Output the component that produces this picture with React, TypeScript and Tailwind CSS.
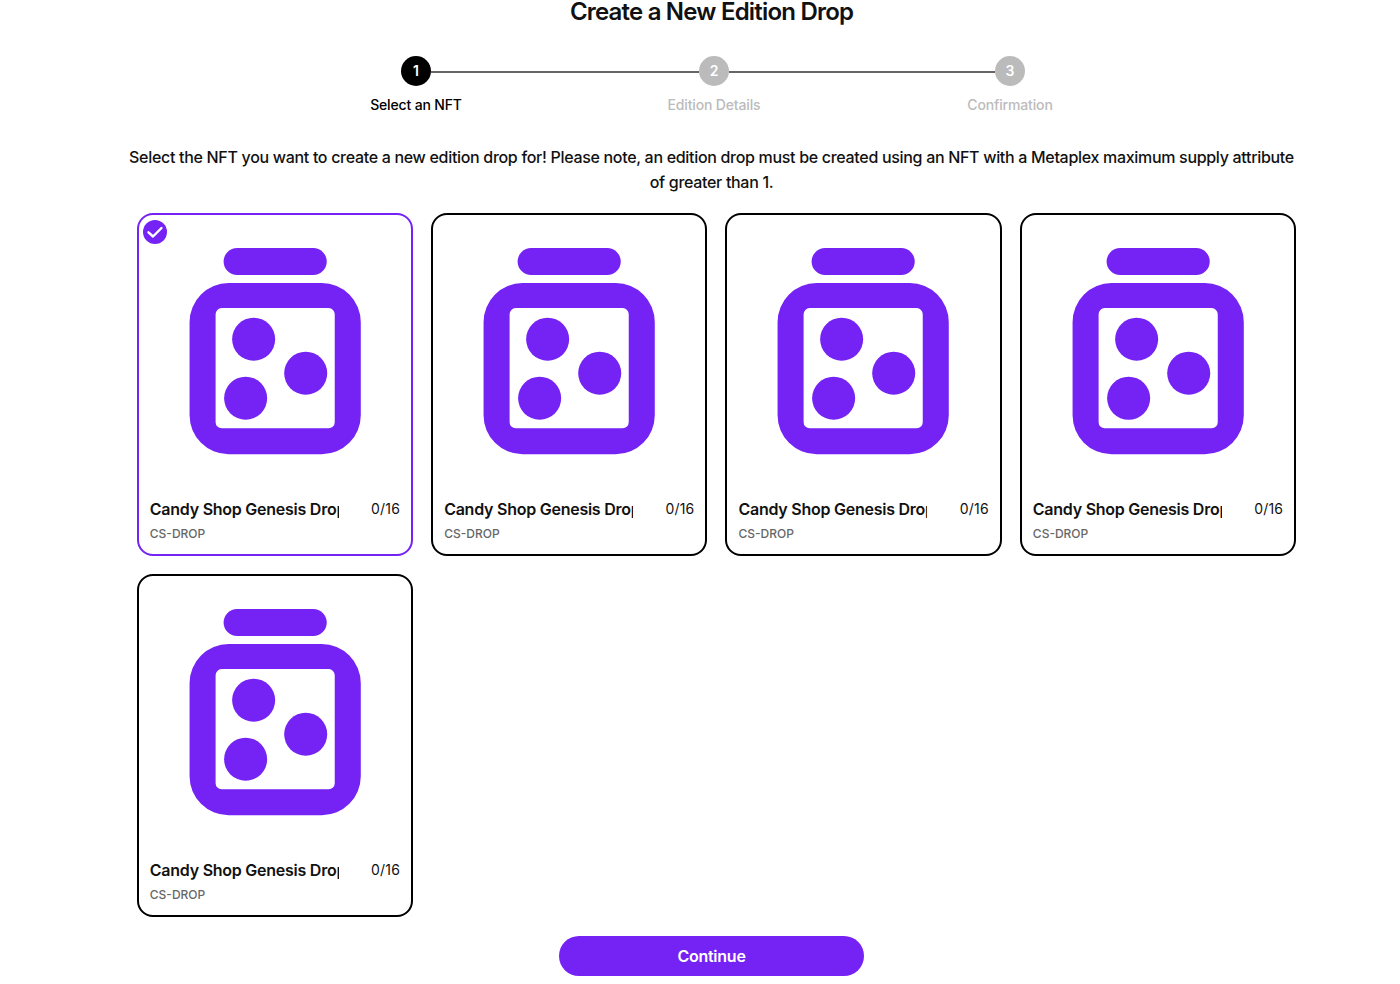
import React from "react";

const steps = [
  { label: "Select an NFT", active: true },
  { label: "Edition Details", active: false },
  { label: "Confirmation", active: false },
];

function JarImage() {
  return (
    <svg viewBox="-0.5 0 272 272" className="block w-full h-auto blur-[0.6px]" fill="#7522f5">
      <rect x="84" y="33" width="103" height="27" rx="13.5" />
      <path
        fillRule="evenodd"
        d="M89 68h93a39 39 0 0 1 39 39v93a39 39 0 0 1-39 39H89a39 39 0 0 1-39-39v-93a39 39 0 0 1 39-39zM82 93a6 6 0 0 0-6 6v108a6 6 0 0 0 6 6h107a6 6 0 0 0 6-6V99a6 6 0 0 0-6-6z"
      />
      <circle cx="114" cy="124" r="21.5" />
      <circle cx="166" cy="158" r="21.5" />
      <circle cx="106" cy="183" r="21.5" />
    </svg>
  );
}

function DropCard({ selected }: { selected?: boolean }) {
  return (
    <div
      className={
        selected
          ? "relative h-[343px] rounded-2xl border-2 border-[#7522f5] bg-white"
          : "relative h-[343px] rounded-2xl border-2 border-black bg-white"
      }
    >
      {selected && (
        <div className="absolute left-[4px] top-[5px] h-[24px] w-[24px] rounded-full bg-[#7522f5]">
          <svg viewBox="0 0 24 24" className="h-[24px] w-[24px]" fill="none" stroke="white" strokeWidth="2.4" strokeLinecap="round" strokeLinejoin="round">
            <path d="M5.5 12.3l4.5 4.2 8.5-8.5" />
          </svg>
        </div>
      )}
      <JarImage />
      <div className="flex items-center justify-between px-[11px] pt-[10px]">
        <div className="w-[189px] overflow-hidden whitespace-nowrap text-[16px] leading-[24px] font-semibold tracking-[-0.25px] text-[#111]">
          Candy Shop Genesis Drop
        </div>
        <div className="text-[14px] leading-[24px] tracking-[0.2px] text-[#111]">0/16</div>
      </div>
      <div className="px-[11px] pt-[3px] text-[12px] leading-[20px] font-medium text-[#666]">CS-DROP</div>
    </div>
  );
}

export default function App() {
  return (
    <div className="min-h-[984px] bg-white font-['Inter',sans-serif]">
      <h1 className="pl-[23px] text-center text-[24px] leading-[24px] font-semibold tracking-[-0.8px] text-[#111]">
        Create a New Edition Drop
      </h1>

      <div className="mt-[32px] ml-[401px] flex w-[624px] items-center">
        <div className="flex h-[30px] w-[30px] items-center justify-center rounded-full bg-black pb-[2px] text-[14px] font-semibold text-white">
          1
        </div>
        <div className="mt-[2px] h-[2px] w-[268px] bg-[#666]" />
        <div className="flex h-[30px] w-[30px] items-center justify-center rounded-full bg-[#bbb] pb-[2px] text-[14px] font-semibold text-white">
          2
        </div>
        <div className="mt-[2px] h-[2px] w-[266px] bg-[#666]" />
        <div className="flex h-[30px] w-[30px] items-center justify-center rounded-full bg-[#bbb] pb-[2px] text-[14px] font-semibold text-white">
          3
        </div>
      </div>

      <div className="mt-[7px] ml-[316px] flex">
        {steps.map((s, i) => (
          <div
            key={s.label}
            className={
              (s.active ? "text-black" : "text-[#bbb]") +
              (i === 1 ? " ml-[98px] mr-[96px]" : "") +
              " w-[200px] text-center text-[14px] leading-[24px] font-medium tracking-[-0.15px]"
            }
          >
            {s.label}
          </div>
        ))}
      </div>

      <p className="mx-auto mt-[28px] w-[1200px] pl-[23px] text-center text-[16px] leading-[25px] font-medium tracking-[-0.31px] text-[#111]">
        Select the NFT you want to create a new edition drop for! Please note, an edition drop must be created using an
        NFT with a Metaplex maximum supply attribute of greater than 1.
      </p>

      <div className="mt-[18px] ml-[136.8px] grid w-[1159.4px] grid-cols-4 gap-[18px]">
        <DropCard selected />
        <DropCard />
        <DropCard />
        <DropCard />
        <DropCard />
      </div>

      <div className="mt-[19px] flex justify-center pl-[23px]">
        <button className="h-[40px] w-[305px] rounded-full bg-[#7522f5] text-[16px] font-semibold tracking-[-0.25px] text-white">
          Continue
        </button>
      </div>
    </div>
  );
}
